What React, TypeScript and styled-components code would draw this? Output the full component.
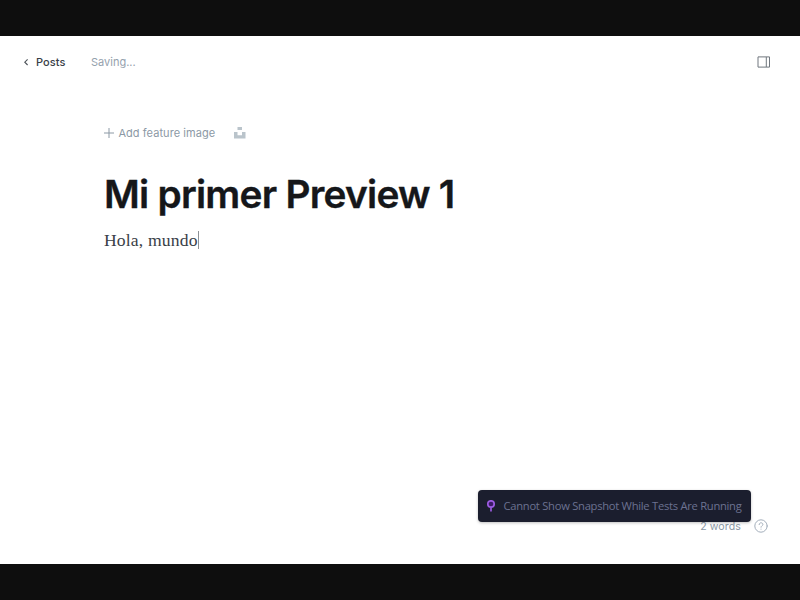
import React from "react";
import styled, { createGlobalStyle } from "styled-components";

const GlobalStyle = createGlobalStyle`
  * { box-sizing: border-box; }
  body { margin: 0; background: #0e0e0e; }
  svg { flex-shrink: 0; }
`;

const Frame = styled.div`
  width: 800px;
  height: 600px;
  padding: 36px 0;
  background: #0e0e0e;
  overflow: hidden;
`;

const Editor = styled.main`
  position: relative;
  display: flex;
  flex-direction: column;
  height: 528px;
  background: #fff;
  font-family: Inter, sans-serif;
`;

const TopBar = styled.header`
  display: flex;
  align-items: center;
  height: 52px;
  padding: 0 30px 0 23px;
`;

const BackLink = styled.a`
  display: flex;
  align-items: center;
  gap: 7px;
  width: 68px;
  color: #394047;
  font-size: 11px;
  font-weight: 500;
  letter-spacing: 0.05px;
  white-space: nowrap;
`;

const Status = styled.span`
  flex: 1;
  color: #95a1ad;
  font-size: 11px;
  letter-spacing: 0;
`;

const Content = styled.section`
  display: flex;
  flex-direction: column;
  padding: 34px 104px 0;
`;

const FeatureRow = styled.div`
  display: flex;
  align-items: center;
  height: 22px;
  color: #8c99a5;
  font-size: 11px;
  letter-spacing: 0.06px;
`;

const FeatureLabel = styled.span`
  width: 115px;
  margin-left: 4.4px;
  white-space: nowrap;
`;

const Title = styled.h1`
  margin: 26px 0 0;
  color: #15171a;
  font-size: 38.8px;
  font-weight: 600;
  -webkit-text-stroke: 0.35px #15171a;
  line-height: 48px;
  letter-spacing: -0.75px;
  white-space: nowrap;
`;

const Body = styled.p`
  display: flex;
  align-items: center;
  height: 24px;
  margin: 10px 0 0;
  color: #394047;
  font: 17.6px/24px "Liberation Serif", serif;
  letter-spacing: 0.16px;
  white-space: nowrap;
`;

const Caret = styled.span`
  width: 1px;
  height: 18px;
  background: #8d9196;
`;

const Footer = styled.footer`
  display: flex;
  align-items: center;
  justify-content: flex-end;
  gap: 12.5px;
  height: 20px;
  margin-top: auto;
  margin-bottom: 28px;
  padding-right: 32.5px;
  color: #8c99a5;
  font-size: 10.6px;
  letter-spacing: 0.1px;
`;

const Toast = styled.div`
  position: absolute;
  left: 478px;
  top: 454px;
  display: flex;
  align-items: center;
  width: 273px;
  height: 32px;
  padding-left: 8px;
  gap: 7.5px;
  border-radius: 4px;
  background: #1b1e2e;
  box-shadow: 0 1px 3px rgba(0, 0, 0, 0.25);
  color: #6c7291;
  font: 11.2px/16px "Open Sans", sans-serif;
  white-space: nowrap;
`;

const ToastText = styled.span`
  letter-spacing: -0.27px;
`;

export default function App() {
  return (
    <Frame>
      <GlobalStyle />
      <Editor>
        <TopBar>
          <BackLink>
            <svg width="6" height="8" viewBox="0 0 6 8" fill="none" stroke="#4b5157" strokeWidth="1.1">
              <path d="M4.6 1.4 1.8 4.2l2.8 2.8" />
            </svg>
            Posts
          </BackLink>
          <Status>Saving...</Status>
          <svg width="13" height="12" viewBox="0 0 13 12" fill="none" stroke="#70777e">
            <path d="M1 .9h11.5v10.2H1zM9.3 1v10" />
          </svg>
        </TopBar>
        <Content>
          <FeatureRow>
            <svg width="10" height="10" viewBox="0 0 10 10" stroke="#8c99a5">
              <path d="M5 0v10M0 5h10" />
            </svg>
            <FeatureLabel>Add feature image</FeatureLabel>
            <svg width="13" height="13" viewBox="0 0 13 13" fill="#bac4cb">
              <path d="M4.5 0H9v3H4.5zM1 5h3.5v3.2H9V5h3.5v6.5H1z" />
            </svg>
          </FeatureRow>
          <Title>Mi primer Preview 1</Title>
          <Body>
            <span>Hola, mundo</span>
            <Caret />
          </Body>
        </Content>
        <Footer>
          <span>2 words</span>
          <svg width="14" height="14" viewBox="0 0 14 14" fill="none" stroke="#a3aebb" strokeLinecap="round">
            <circle cx="7" cy="7" r="6.2" />
            <path d="M5.1 5.6C5.1 3.1 8.9 3.2 8.9 5.5 8.9 6.8 7 6.7 7 8.2M7 10.1v.1" />
          </svg>
        </Footer>
        <Toast>
          <svg width="10" height="12" viewBox="0 0 10 12" fill="#3b1a66" stroke="#9b5be0" strokeWidth="1.7">
            <circle cx="5" cy="4" r="3.2" />
            <path d="M5 7.2v4.3" />
          </svg>
          <ToastText>Cannot Show Snapshot While Tests Are Running</ToastText>
        </Toast>
      </Editor>
    </Frame>
  );
}
